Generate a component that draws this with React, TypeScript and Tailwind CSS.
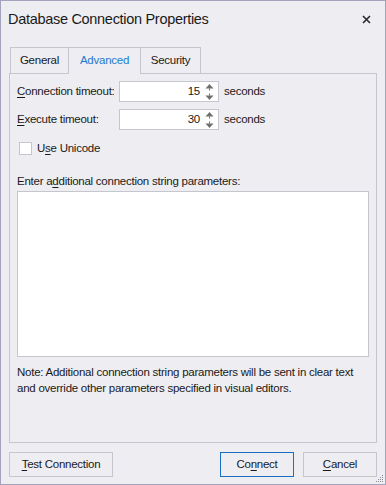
import type { ReactNode } from "react";

const font = { fontFamily: '"Liberation Sans", Arial, sans-serif' };

// Access-key underline.
function Key({ children }: { children: ReactNode }): JSX.Element {
  return <span className="underline decoration-1 underline-offset-2">{children}</span>;
}

function SpinArrows(): JSX.Element {
  return (
    <svg width="9" height="18" viewBox="0 0 9 18" className="shrink-0">
      <path d="M4.5 1 L8.5 5.5 L0.5 5.5 Z" fill="#6f6f6f" />
      <rect x="4" y="5.5" width="1" height="2" fill="#6f6f6f" />
      <rect x="4" y="10.5" width="1" height="2" fill="#6f6f6f" />
      <path d="M4.5 17 L8.5 12.5 L0.5 12.5 Z" fill="#6f6f6f" />
    </svg>
  );
}

function Spinner({ value }: { value: string }): JSX.Element {
  return (
    <div className="flex h-[21px] w-[100px] items-center justify-end gap-[5px] border border-[#c6c6cf] bg-white pr-[4px]">
      <span>{value}</span>
      <SpinArrows />
    </div>
  );
}

function Row({ label, value }: { label: ReactNode; value: string }): JSX.Element {
  return (
    <div className="flex items-center">
      <span className="w-[109px] pl-[7px]">{label}</span>
      <Spinner value={value} />
      <span className="ml-[5px]">seconds</span>
    </div>
  );
}

export default function App(): JSX.Element {
  return (
    <div
      style={font}
      className="flex h-[485px] w-[386px] flex-col whitespace-nowrap border border-[#a3a3bd] bg-[#eeedf2] text-[11.5px] tracking-[-0.25px] text-[#1a1a1a]"
    >
      <div className="flex h-[37px] items-center justify-between pl-[7px] pr-[14px]">
        <span className="text-[14.5px] tracking-[-0.3px]">Database Connection Properties</span>
        <svg width="9" height="9" viewBox="0 0 9 9">
          <path d="M1 1 L8 8 M8 1 L1 8" stroke="#2a2a2a" strokeWidth="1.6" />
        </svg>
      </div>

      <div className="mt-[9px] flex pl-[9px]">
        <div className="flex h-[26px] w-[59px] items-center justify-center border border-b-0 border-[#c6c6cf]">
          General
        </div>
        <div className="flex h-[26px] w-[71px] items-center justify-center border-t border-[#c6c6cf] text-[#1e7ad0]">
          Advanced
        </div>
        <div className="flex h-[26px] w-[61px] items-center justify-center border border-b-0 border-[#c6c6cf]">
          Security
        </div>
        <div className="flex-1" />
      </div>

      <div className="mx-[8px] flex h-[370px] flex-col border border-t-0 border-[#c6c6cf]">
        <div className="flex">
          <div className="w-[59px] border-b border-[#c6c6cf]" />
          <div className="w-[71px]" />
          <div className="flex-1 border-b border-[#c6c6cf]" />
        </div>
        <div className="mt-[7px] flex flex-col gap-[7px]">
          <Row label={<><Key>C</Key>onnection timeout:</>} value="15" />
          <Row label={<><Key>E</Key>xecute timeout:</>} value="30" />
        </div>
        <div className="mt-[10px] flex items-center pl-[9px]">
          <div className="h-[13px] w-[13px] border border-[#c6c6cf] bg-white" />
          <span className="ml-[5px]">U<Key>s</Key>e Unicode</span>
        </div>
        <div className="mt-[16px] pl-[7px] leading-[16px]">
          Enter a<Key>d</Key>ditional connection string parameters:
        </div>
        <div className="mx-[7px] mt-[2px] h-[166px] border border-[#c6c6cf] bg-white" />
        <div className="mt-[7px] pl-[7px] leading-[16px]">
          Note: Additional connection string parameters will be sent in clear text
          <br />
          and override other parameters specified in visual editors.
        </div>
      </div>

      <div className="relative mt-[9px] flex flex-1 items-start px-[8px]">
        <button className="h-[25px] w-[104px] border border-[#c6c6cf] bg-[#eeedf2]">
          <Key>T</Key>est Connection
        </button>
        <div className="flex-1" />
        <button className="h-[25px] w-[74px] border border-[#1a6fc4] bg-[#eeedf2]">
          Co<Key>n</Key>nect
        </button>
        <button className="ml-[9px] h-[25px] w-[74px] border border-[#c6c6cf] bg-[#eeedf2]">
          <Key>C</Key>ancel
        </button>
        <svg width="8" height="8" viewBox="0 0 8 8" className="absolute bottom-[1px] right-[1px]">
          <rect x="6" y="0" width="1" height="1" fill="#8a8a9a" />
          <rect x="4" y="2" width="1" height="1" fill="#8a8a9a" />
          <rect x="6" y="2" width="1" height="1" fill="#8a8a9a" />
          <rect x="2" y="4" width="1" height="1" fill="#8a8a9a" />
          <rect x="4" y="4" width="1" height="1" fill="#8a8a9a" />
          <rect x="6" y="4" width="1" height="1" fill="#8a8a9a" />
          <rect x="0" y="6" width="1" height="1" fill="#8a8a9a" />
          <rect x="2" y="6" width="1" height="1" fill="#8a8a9a" />
          <rect x="4" y="6" width="1" height="1" fill="#8a8a9a" />
          <rect x="6" y="6" width="1" height="1" fill="#8a8a9a" />
        </svg>
      </div>
    </div>
  );
}
